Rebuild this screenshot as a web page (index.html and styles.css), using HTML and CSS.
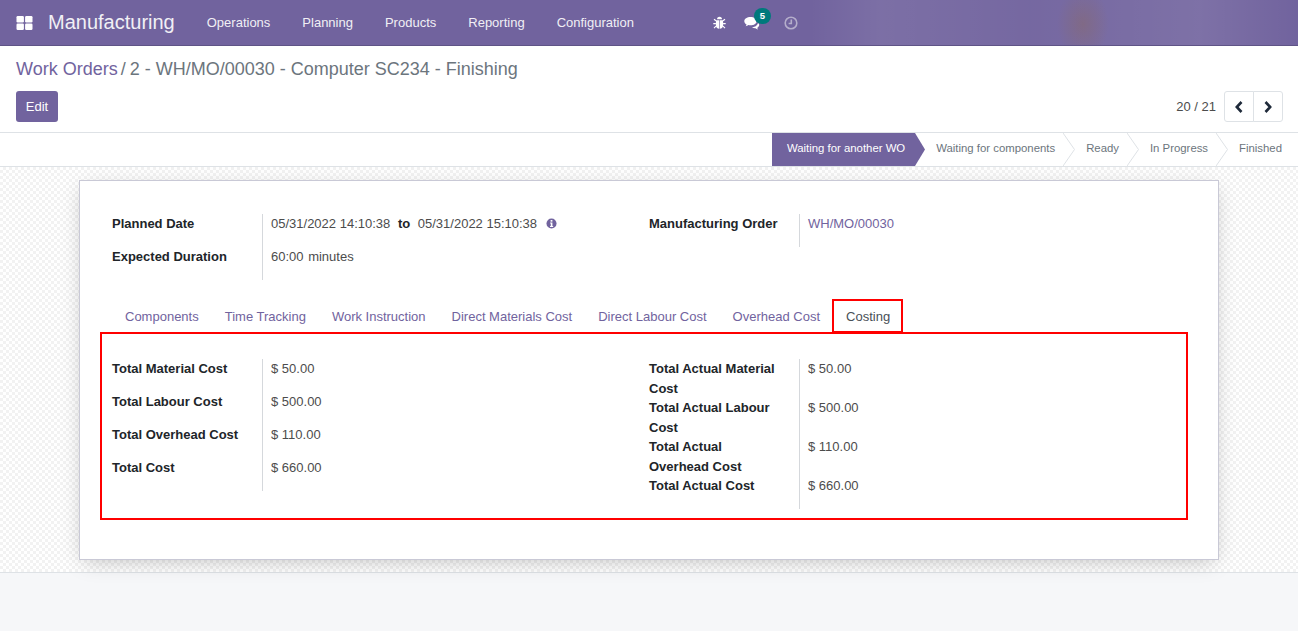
FILE: index.html
```html
<!DOCTYPE html>
<html lang="en">
<head>
    <meta charset="UTF-8">
    <title>Work Orders - Manufacturing</title>
    <link rel="stylesheet" href="styles.css">
</head>
<body>
    <header class="navbar">
        <svg class="apps-icon" viewBox="0 0 16 14"><rect x="0" y="0" width="7.4" height="6.4" rx="1.2"/><rect x="8.6" y="0" width="7.4" height="6.4" rx="1.2"/><rect x="0" y="7.6" width="7.4" height="6.4" rx="1.2"/><rect x="8.6" y="7.6" width="7.4" height="6.4" rx="1.2"/></svg>
        <span class="app-name">Manufacturing</span>
        <nav class="menu">
            <a>Operations</a>
            <a>Planning</a>
            <a>Products</a>
            <a>Reporting</a>
            <a>Configuration</a>
        </nav>
        <div class="systray">
            <svg class="bug-icon" viewBox="0 0 13 14"><path d="M4 3.2a2.5 2.5 0 0 1 5 0z"/><path d="M2.9 4.2h3.3v8.6c-1.9-.2-3.3-1.4-3.3-3.3zM6.8 4.2h3.3v5.3c0 1.9-1.4 3.1-3.3 3.3z"/><path d="M1 3.2l2 1.6M12 3.2l-2 1.6M.3 7.6h2.6M12.7 7.6h-2.6M1 12.2l2-2M12 12.2l-2-2" class="bug-legs"/></svg>
            <span class="chat">
                <svg class="chat-icon" viewBox="0 0 16 14"><path d="M6.5 1C3 1 .3 2.9.3 5.2c0 1.3.9 2.5 2.3 3.3-.2.7-.6 1.3-1 1.8 1.1-.2 2.1-.7 2.8-1.3.7.2 1.4.3 2.1.3 3.5 0 6.2-1.9 6.2-4.1S10 1 6.5 1z"/><path d="M14 6.4c0 2.6-2.7 4.6-6.2 4.8 1 .8 2.3 1.2 3.7 1.1.7.6 1.6 1 2.6 1.2-.4-.4-.7-1-.9-1.5 1.2-.7 2-1.8 2-2.9 0-1-.6-2-1.5-2.6z"/></svg>
                <span class="badge">5</span>
            </span>
            <svg class="clock-icon" viewBox="0 0 14 14"><circle cx="7" cy="7" r="5.8"/><path d="M7.3 3.5v4H4.6"/></svg>
        </div>
    </header>

    <section class="control-panel">
        <div class="crumbs"><a>Work Orders</a><span class="sep">/</span><span>2 - WH/MO/00030 - Computer SC234 - Finishing</span></div>
        <div class="cp-row">
            <button class="btn-edit">Edit</button>
            <div class="pager">
                <span class="pager-text">20 / 21</span>
                <div class="pager-btns">
                    <button><svg viewBox="0 0 10 14"><path d="M7.5 2L2.8 7l4.7 5"/></svg></button>
                    <button><svg viewBox="0 0 10 14"><path d="M2.5 2l4.7 5-4.7 5"/></svg></button>
                </div>
            </div>
        </div>
    </section>

    <div class="statusbar">
        <span class="step active">Waiting for another WO</span>
        <svg class="chev chev-active" viewBox="0 0 10 33"><path d="M0 0l10 16.5L0 33z"/></svg>
        <span class="step">Waiting for components</span>
        <svg class="chev" viewBox="0 0 12 33"><path d="M0 0l11.5 16.5L0 33"/></svg>
        <span class="step">Ready</span>
        <svg class="chev" viewBox="0 0 12 33"><path d="M0 0l11.5 16.5L0 33"/></svg>
        <span class="step">In Progress</span>
        <svg class="chev" viewBox="0 0 12 33"><path d="M0 0l11.5 16.5L0 33"/></svg>
        <span class="step last">Finished</span>
    </div>

    <main class="sheet-bg">
        <div class="sheet">
            <div class="group-row">
                <div class="group">
                    <div class="lbl">Planned Date</div>
                    <div class="val">05/31/2022 14:10:38 <b class="to">to</b> 05/31/2022 15:10:38
                        <svg class="info-icon" viewBox="0 0 12 12"><circle cx="6" cy="6" r="5.5"/><rect x="5" y="2.2" width="2" height="1.8" fill="#fff"/><path d="M4.5 5h2.5v3.8h.8v1H4.4v-1h.8V6h-.7z" fill="#fff"/></svg>
                    </div>
                    <div class="lbl">Expected Duration</div>
                    <div class="val">60:00 <span class="unit">minutes</span></div>
                </div>
                <div class="group">
                    <div class="lbl">Manufacturing Order</div>
                    <div class="val"><a>WH/MO/00030</a></div>
                </div>
            </div>

            <ul class="tabs">
                <li>Components</li>
                <li>Time Tracking</li>
                <li>Work Instruction</li>
                <li>Direct Materials Cost</li>
                <li>Direct Labour Cost</li>
                <li>Overhead Cost</li>
                <li class="current">Costing</li>
            </ul>

            <div class="tab-panel">
                <div class="group">
                    <div class="lbl">Total Material Cost</div>
                    <div class="val">$ 50.00</div>
                    <div class="lbl">Total Labour Cost</div>
                    <div class="val">$ 500.00</div>
                    <div class="lbl">Total Overhead Cost</div>
                    <div class="val">$ 110.00</div>
                    <div class="lbl">Total Cost</div>
                    <div class="val">$ 660.00</div>
                </div>
                <div class="group">
                    <div class="lbl">Total Actual Material Cost</div>
                    <div class="val">$ 50.00</div>
                    <div class="lbl">Total Actual Labour Cost</div>
                    <div class="val">$ 500.00</div>
                    <div class="lbl">Total Actual Overhead Cost</div>
                    <div class="val">$ 110.00</div>
                    <div class="lbl">Total Actual Cost</div>
                    <div class="val">$ 660.00</div>
                </div>
            </div>
        </div>
    </main>
</body>
</html>
```

FILE: styles.css
```css
* {
    box-sizing: border-box;
}

html, body {
    height: 100%;
}

body {
    margin: 0;
    overflow: hidden;
    font-family: 'Liberation Sans', sans-serif;
    font-size: 13px;
    line-height: 19.5px;
    color: #4c4c4c;
    background-color: #f6f7f9;
}

a {
    color: #71639e;
}

/* top bar */
.navbar {
    display: flex;
    align-items: center;
    height: 46px;
    padding-left: 16px;
    color: #fff;
    border-bottom: 1px solid #5f5486;
    background-color: #71639e;
    background-image:
        radial-gradient(ellipse 26px 36px at 1083px 24px, rgba(135, 105, 110, 0.55), rgba(120, 100, 130, 0) 100%),
        linear-gradient(90deg, rgba(255, 255, 255, 0) 810px, rgba(255, 255, 255, 0.08) 880px, rgba(255, 255, 255, 0.03) 1030px, rgba(255, 255, 255, 0.09) 1200px, rgba(255, 255, 255, 0) 1298px);
}

.apps-icon {
    width: 17px;
    height: 14px;
    fill: #fff;
}

.app-name {
    margin-left: 15px;
    font-size: 20px;
    opacity: 0.9;
}

.menu {
    display: flex;
    margin-left: 32px;
    gap: 32px;
}

.menu a {
    color: #fff;
    opacity: 0.9;
}

.systray {
    display: flex;
    align-items: center;
    margin-left: 79px;
}

.bug-icon {
    width: 13px;
    height: 14px;
    fill: #fff;
}

.bug-legs {
    fill: none;
    stroke: #fff;
    stroke-width: 1.1;
}

.chat {
    position: relative;
    display: flex;
    margin-left: 18px;
}

.chat-icon {
    width: 16px;
    height: 14px;
    fill: #fff;
}

.badge {
    position: absolute;
    top: -8px;
    left: 10px;
    width: 17px;
    height: 16px;
    border-radius: 8px;
    background-color: #00797c;
    font-size: 9.5px;
    font-weight: 700;
    line-height: 15px;
    text-align: center;
}

.clock-icon {
    width: 14px;
    height: 14px;
    margin-left: 24px;
    fill: none;
    stroke: #b5aecb;
    stroke-width: 1.6;
}

/* breadcrumb, edit, pager */
.control-panel {
    height: 87px;
    padding: 12px 15px 0 16px;
    background-color: #fff;
    border-bottom: 1px solid #dee2e6;
}

.crumbs {
    font-size: 18px;
    line-height: 22px;
    color: #6c757d;
}

.sep {
    margin: 0 4px 0 3px;
}

.cp-row {
    display: flex;
    justify-content: space-between;
    align-items: center;
    margin-top: 11px;
}

.btn-edit {
    width: 42px;
    height: 31px;
    padding: 0;
    border: none;
    border-radius: 3px;
    color: #fff;
    background-color: #71639e;
    font: inherit;
}

.pager {
    display: flex;
    align-items: center;
}

.pager-text {
    margin-right: 8px;
}

.pager-btns {
    display: flex;
}

.pager-btns button {
    display: flex;
    align-items: center;
    justify-content: center;
    width: 30px;
    height: 31px;
    padding: 0;
    border: 1px solid #dee2e6;
    background-color: #fff;
}

.pager-btns button:first-child {
    border-radius: 3px 0 0 3px;
}

.pager-btns button:last-child {
    margin-left: -1px;
    border-radius: 0 3px 3px 0;
}

.pager-btns svg {
    width: 10px;
    height: 14px;
    fill: none;
    stroke: #1f2a3a;
    stroke-width: 2.6;
}

/* status steps */
.statusbar {
    display: flex;
    justify-content: flex-end;
    align-items: center;
    height: 34px;
    background-color: #fff;
    border-bottom: 1px solid #dee2e6;
    font-size: 11.375px;
    color: #6c757d;
}

.step {
    display: flex;
    align-items: center;
    height: 33px;
    padding: 0 8px 2px 11px;
}

.step.active {
    padding: 0 10px 2px 15px;
    color: #fff;
    background-color: #71639e;
}

.step.last {
    padding-right: 16px;
}

.chev {
    width: 12px;
    height: 33px;
    fill: none;
    stroke: #dee2e6;
}

.chev-active {
    width: 10px;
    fill: #71639e;
    stroke: none;
}

/* form sheet */
.sheet-bg {
    height: 406px;
    padding-top: 13px;
    border-bottom: 1px solid #dee2e6;
    background: repeating-conic-gradient(#f2f2f2 0 25%, #fff 0 50%) 0 0 / 6px 6px;
}

.sheet {
    width: 1140px;
    height: 380px;
    margin-left: 79px;
    padding: 33px 32px 0;
    border: 1px solid #c9c9d6;
    background-color: #fff;
    box-shadow: 0 5px 20px -5px rgba(0, 0, 0, 0.25);
}

.group-row,
.tab-panel {
    display: grid;
    grid-template-columns: 537px 537px;
    align-items: start;
}

.group {
    display: grid;
    grid-template-columns: 150px 1fr;
}

.lbl {
    padding-right: 16px;
    font-weight: 700;
    color: #212529;
}

.val {
    min-height: 33px;
    padding-left: 8px;
    border-left: 1px solid #d5d8dc;
}

.to {
    margin: 0 4px;
    color: #212529;
}

.unit {
    margin-left: 1px;
}

.info-icon {
    width: 11px;
    height: 11px;
    margin-left: 5px;
    vertical-align: -1px;
    fill: #71639e;
}

.tabs {
    display: flex;
    height: 32px;
    margin: 20px 0 0;
    padding: 0;
    list-style: none;
    color: #71639e;
}

.tabs li {
    height: 32px;
    padding: 7px 13px 0;
}

.tabs .current {
    padding-right: 12px;
    color: #495057;
    box-shadow: inset 1px 0 0 #dee2e6;
    outline: 2px solid #f00;
    outline-offset: -1px;
}

.tab-panel {
    margin: 0 -2px 0 -12px;
    padding: 25px 0 9px 10px;
    border: 2px solid #f00;
}
```
